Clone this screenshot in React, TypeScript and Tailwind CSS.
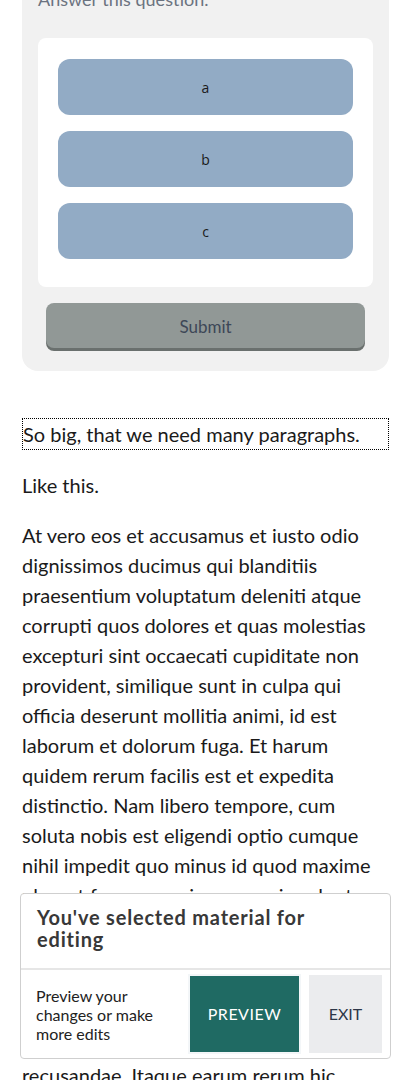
import React from 'react';

const options = ['a', 'b', 'c'];

const lorem =
  'At vero eos et accusamus et iusto odio dignissimos ducimus qui blanditiis praesentium voluptatum deleniti atque corrupti quos dolores et quas molestias excepturi sint occaecati cupiditate non provident, similique sunt in culpa qui officia deserunt mollitia animi, id est laborum et dolorum fuga. Et harum quidem rerum facilis est et expedita distinctio. Nam libero tempore, cum soluta nobis est eligendi optio cumque nihil impedit quo minus id quod maxime placeat facere possimus, omnis voluptas assumenda est, omnis dolor repellendus. Temporibus autem quibusdam et aut officiis debitis aut rerum necessitatibus saepe eveniet ut et voluptates repudiandae sint et molestiae non recusandae. Itaque earum rerum hic tenetur a sapiente delectus, ut aut reiciendis voluptatibus maiores alias consequatur aut perferendis doloribus asperiores repellat.';

const QuestionCard: React.FC = () => (
  <div className="mt-[-30px] bg-[#f1f1f1] rounded-b-2xl px-4 pt-4 pb-[23px]">
    <p className="text-[18px] leading-[27px] text-[#6b7380] mb-[25px] font-['Lato',sans-serif]">
      Answer this question.
    </p>
    <div className="bg-white rounded-lg px-5 pt-[21px] pb-[28px] flex flex-col gap-4">
      {options.map((o) => (
        <button
          key={o}
          className="h-14 w-full rounded-xl bg-[#92abc5] text-[14px] text-[#1a1a1a] font-['Open_Sans',sans-serif]"
        >
          {o}
        </button>
      ))}
    </div>
    <button className="mt-4 mx-2 w-[calc(100%-16px)] h-[45px] pt-[3px] rounded-lg bg-[#919896] shadow-[0_3px_0_#6a706e] text-[17px] text-[#3d4757]">
      Submit
    </button>
  </div>
);

const EditBar: React.FC = () => (
  <div className="fixed left-5 right-5 bottom-[21px] bg-white border border-[#cfcfcf] rounded">
    <div className="pl-4 pr-4 pt-3 pb-[18px] border-b-2 border-[#e6e6e6]">
      <h2 className="text-[20px] leading-[22px] font-bold text-[#383838] tracking-[0.8px] font-['Lato',sans-serif]">
        You've selected material for editing
      </h2>
    </div>
    <div className="flex items-center pl-[15px] pr-2 py-[5px]">
      <p className="w-[140px] text-[16px] leading-[19px] text-[#222]">
        Preview your changes or make more edits
      </p>
      <button className="ml-auto w-[109px] h-[76px] outline-2 outline-[#f3f6f8] bg-[#1f6a63] text-white text-[16px] tracking-[0.5px]">
        PREVIEW
      </button>
      <button className="ml-[10px] w-[73px] h-[78px] bg-[#ebecee] text-[#2d3748] text-[16px]">
        EXIT
      </button>
    </div>
  </div>
);

export default function App() {
  return (
    <div className="min-h-screen bg-white font-['Lato',sans-serif] text-[#1a1a1a] overflow-hidden">
      <div className="mx-[22px]">
        <QuestionCard />
        <div className="mt-[47px] text-[20px] leading-[30px]">
          <p className="border border-dotted border-black mb-5">So big, that we need many paragraphs.</p>
          <p className="mb-5">Like this.</p>
          <p className="mb-5">{lorem}</p>
        </div>
      </div>
      <EditBar />
    </div>
  );
}
